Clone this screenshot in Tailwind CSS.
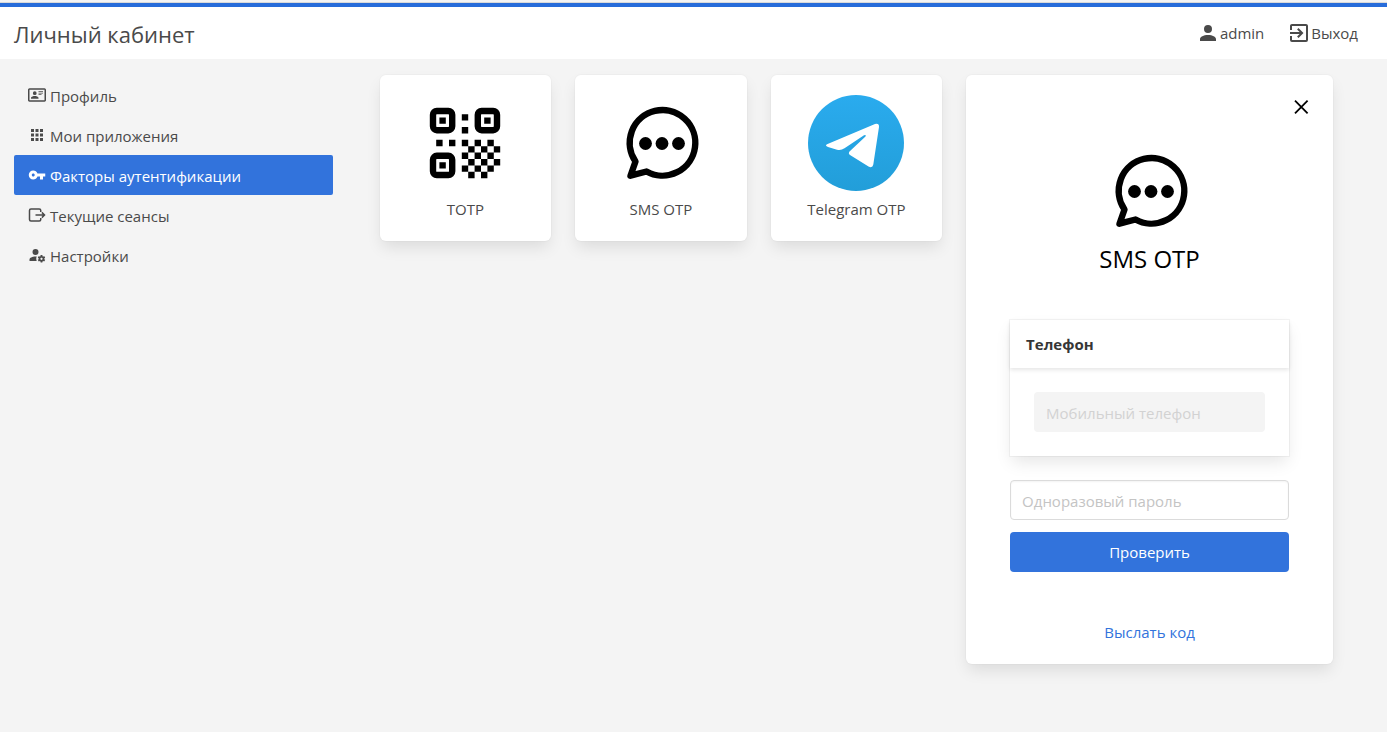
<!DOCTYPE html>
<html lang="ru">

<head>
  <meta charset="UTF-8">
  <meta name="viewport" content="width=device-width, initial-scale=1.0">
  <title>Личный кабинет</title>
  <script src="https://cdn.jsdelivr.net/npm/@tailwindcss/browser@4"></script>
</head>

<body class="min-h-screen bg-[#f4f4f4] font-['Open_Sans',sans-serif] text-[15px] leading-6 text-[#4a4a4a]">
  <!-- Header -->
  <div class="h-[3px] border-b border-[#d9d9d9] bg-[#f4f4f4]"></div>
  <header class="flex h-14 items-center justify-between border-t-4 border-[#276cda] bg-white pl-3.5 pr-[29px]">
    <h1 class="pt-0.5 text-[22px] leading-8">Личный кабинет</h1>
    <nav class="flex items-center gap-[23px]">
      <a href="#" class="flex items-center">
        <svg class="size-6" viewBox="0 0 24 24" fill="currentColor"><path d="M12,4A4,4 0 0,1 16,8A4,4 0 0,1 12,12A4,4 0 0,1 8,8A4,4 0 0,1 12,4M12,14C16.42,14 20,15.79 20,18V20H4V18C4,15.79 7.58,14 12,14Z"/></svg>
        <span>admin</span>
      </a>
      <a href="#" class="flex items-center">
        <svg class="size-6" viewBox="0 0 24 24" fill="currentColor"><path d="M19,3H5C3.89,3 3,3.89 3,5V9H5V5H19V19H5V15H3V19A2,2 0 0,0 5,21H19A2,2 0 0,0 21,19V5C21,3.89 20.1,3 19,3M10.08,15.58L11.5,17L16.5,12L11.5,7L10.08,8.41L12.67,11H3V13H12.67L10.08,15.58Z"/></svg>
        <span>Выход</span>
      </a>
    </nav>
  </header>

  <div class="flex items-start pt-4">
    <!-- Sidebar -->
    <aside class="w-1/4 shrink-0 px-3.5">
      <ul>
        <li>
          <a href="#" class="flex h-10 items-center gap-1 rounded-xs px-3.5">
            <svg class="size-[18px]" viewBox="0 0 24 24" fill="currentColor"><path d="M22,3H2C0.91,3.04 0.04,3.91 0,5V19C0.04,20.09 0.91,20.96 2,21H22C23.09,20.96 23.96,20.09 24,19V5C23.96,3.91 23.09,3.04 22,3M22,19H2V5H22V19M14,17V15.75C14,14.09 10.66,13.25 9,13.25C7.34,13.25 4,14.09 4,15.75V17H14M9,7A2.5,2.5 0 0,0 6.5,9.5A2.5,2.5 0 0,0 9,12A2.5,2.5 0 0,0 11.5,9.5A2.5,2.5 0 0,0 9,7M14,7V8H20V7H14M14,9V10H20V9H14M14,11V12H18V11H14"/></svg>
            <span class="pt-0.5">Профиль</span>
          </a>
        </li>
        <li>
          <a href="#" class="flex h-10 items-center gap-1 rounded-xs px-3.5">
            <svg class="size-[18px]" viewBox="0 0 24 24" fill="currentColor"><path d="M16,20H20V16H16M16,14H20V10H16M10,8H14V4H10M16,8H20V4H16M10,14H14V10H10M4,14H8V10H4M4,20H8V16H4M10,20H14V16H10M4,8H8V4H4V8Z"/></svg>
            <span class="pt-0.5">Мои приложения</span>
          </a>
        </li>
        <li>
          <a href="#" class="flex h-10 items-center gap-1 rounded-xs bg-[#3273dc] px-3.5 text-white">
            <svg class="size-[18px]" viewBox="0 0 24 24" fill="currentColor"><path d="M7 14C5.9 14 5 13.1 5 12S5.9 10 7 10 9 10.9 9 12 8.1 14 7 14M12.6 10C11.8 7.7 9.6 6 7 6C3.7 6 1 8.7 1 12S3.7 18 7 18C9.6 18 11.8 16.3 12.6 14H16V18H20V14H23V10H12.6Z"/></svg>
            <span class="pt-0.5">Факторы аутентификации</span>
          </a>
        </li>
        <li>
          <a href="#" class="flex h-10 items-center gap-1 rounded-xs px-3.5">
            <svg class="size-[18px]" viewBox="0 0 24 24" fill="none" stroke="currentColor" stroke-width="2"><path d="M17 8V6a2 2 0 0 0-2-2H4a2 2 0 0 0-2 2v12a2 2 0 0 0 2 2h11a2 2 0 0 0 2-2v-2M10 12h11M18.500 8.500L22 12l-3.500 3.500"/></svg>
            <span class="pt-0.5">Текущие сеансы</span>
          </a>
        </li>
        <li>
          <a href="#" class="flex h-10 items-center gap-1 rounded-xs px-3.5">
            <svg class="size-[18px]" viewBox="0 0 24 24" fill="currentColor"><path d="M10 4A4 4 0 0 0 6 8A4 4 0 0 0 10 12A4 4 0 0 0 14 8A4 4 0 0 0 10 4M17 12C16.87 12 16.76 12.09 16.74 12.21L16.55 13.53C16.25 13.66 15.96 13.82 15.7 14L14.46 13.5C14.35 13.5 14.22 13.5 14.15 13.63L13.15 15.36C13.09 15.47 13.11 15.6 13.21 15.68L14.27 16.5C14.25 16.67 14.24 16.83 14.24 17C14.24 17.17 14.25 17.33 14.27 17.5L13.21 18.32C13.12 18.4 13.09 18.53 13.15 18.64L14.15 20.37C14.21 20.5 14.34 20.5 14.46 20.5L15.7 20C15.96 20.18 16.24 20.35 16.55 20.47L16.74 21.79C16.76 21.91 16.86 22 17 22H19C19.11 22 19.22 21.91 19.24 21.79L19.43 20.47C19.73 20.34 20 20.18 20.27 20L21.5 20.5C21.63 20.5 21.76 20.5 21.83 20.37L22.83 18.64C22.89 18.53 22.86 18.4 22.77 18.32L21.7 17.5C21.72 17.33 21.74 17.17 21.74 17C21.74 16.83 21.73 16.67 21.7 16.5L22.76 15.68C22.85 15.6 22.88 15.47 22.82 15.36L21.82 13.63C21.76 13.5 21.63 13.5 21.5 13.5L20.27 14C20 13.82 19.73 13.65 19.42 13.53L19.23 12.21C19.22 12.09 19.11 12 19 12H17M10 14C5.58 14 2 15.79 2 18V20H11.68A7 7 0 0 1 11 17A7 7 0 0 1 11.64 14.09C11.11 14.03 10.56 14 10 14M18 15.5C18.83 15.5 19.5 16.17 19.5 17C19.5 17.83 18.83 18.5 18 18.5C17.16 18.5 16.5 17.83 16.5 17C16.5 16.17 17.17 15.5 18 15.5Z"/></svg>
            <span class="pt-0.5">Настройки</span>
          </a>
        </li>
      </ul>
    </aside>

    <!-- Factors -->
    <main class="grid grow grid-cols-5 items-start gap-6 pl-[33px] pr-[54px]">
      <a href="#" class="flex flex-col items-center gap-1.5 rounded-md bg-white py-5 shadow-[0_8px_16px_-2px_rgba(10,10,10,0.1),0_0_0_1px_rgba(10,10,10,0.02)]">
        <svg class="size-24" viewBox="0 0 15 15">
          <g fill="none" stroke="#000">
            <rect x="2.5" y="2.5" width="3" height="3" rx=".6"/>
            <rect x="9.5" y="2.5" width="3" height="3" rx=".6"/>
            <rect x="2.5" y="9.5" width="3" height="3" rx=".6"/>
          </g>
          <path d="M3.5 3.5h1v1h-1zM10.5 3.5h1v1h-1zM3.5 10.5h1v1h-1zM7 3h1v1h-1zM7 5h1v1h-1zM3 7h1v1h-1zM5 7h1v1h-1zM7 7h1v1h-1zM9 7h1v1h-1zM11 7h1v1h-1zM8 8h1v1h-1zM10 8h1v1h-1zM12 8h1v1h-1zM7 9h1v1h-1zM9 9h1v1h-1zM11 9h1v1h-1zM8 10h1v1h-1zM10 10h1v1h-1zM12 10h1v1h-1zM7 11h1v1h-1zM9 11h1v1h-1zM11 11h1v1h-1zM8 12h1v1h-1zM10 12h1v1h-1z"/>
        </svg>
        <span>TOTP</span>
      </a>
      <a href="#" class="flex flex-col items-center gap-1.5 rounded-md bg-white py-5 shadow-[0_8px_16px_-2px_rgba(10,10,10,0.1),0_0_0_1px_rgba(10,10,10,0.02)]">
        <svg class="size-24" viewBox="0 0 96 96">
          <path d="M22.5 66.500L17.5 80.700L33.5 76.500A32.800 32.800 0 1 0 22.5 66.500Z" fill="none" stroke="#000" stroke-width="6.4" stroke-linejoin="round"/>
          <circle cx="32.5" cy="48.500" r="6.4"/><circle cx="49" cy="48.500" r="6.4"/><circle cx="65.5" cy="48.500" r="6.4"/>
        </svg>
        <span>SMS OTP</span>
      </a>
      <a href="#" class="flex flex-col items-center gap-1.5 rounded-md bg-white py-5 shadow-[0_8px_16px_-2px_rgba(10,10,10,0.1),0_0_0_1px_rgba(10,10,10,0.02)]">
        <svg class="size-24" viewBox="0 0 96 96">
          <defs>
            <linearGradient id="tg" x1="0" y1="0" x2="0" y2="1">
              <stop offset="0" stop-color="#2aabee"/>
              <stop offset="1" stop-color="#229ed9"/>
            </linearGradient>
          </defs>
          <circle cx="48" cy="48" r="48" fill="url(#tg)"/>
          <path d="M19 49.200L67 29Q71.300 28 71 32L65.300 69.500Q64.500 73.500 60.500 71.500L42 60Q40 58.500 41.500 56.500L57.500 41.500Q58.500 39.500 56 40.300L36.500 53.300Q33 55.700 29 54.700L20 52Q16.500 50.500 19 49.200Z" fill="#fff"/>
        </svg>
        <span>Telegram OTP</span>
      </a>

      <!-- SMS OTP panel -->
      <section class="relative col-span-2 flex flex-col items-center rounded-md bg-white px-11 pb-5 pt-[68px] shadow-[0_8px_16px_-2px_rgba(10,10,10,0.1),0_0_0_1px_rgba(10,10,10,0.02)]">
        <button type="button" aria-label="Закрыть" class="absolute right-5 top-5 text-black">
          <svg class="size-6" viewBox="0 0 24 24" fill="none" stroke="currentColor" stroke-width="1.8"><path d="M6 5.700L18.600 18.300M18.600 5.700L6 18.300"/></svg>
        </button>
        <svg class="size-24" viewBox="0 0 96 96">
          <path d="M22.5 66.500L17.5 80.700L33.5 76.500A32.800 32.800 0 1 0 22.5 66.500Z" fill="none" stroke="#000" stroke-width="6.4" stroke-linejoin="round"/>
          <circle cx="32.5" cy="48.500" r="6.4"/><circle cx="49" cy="48.500" r="6.4"/><circle cx="65.5" cy="48.500" r="6.4"/>
        </svg>
        <h2 class="mt-1 text-2xl font-medium text-black">SMS OTP</h2>

        <form class="mt-[45px] w-full">
          <div class="bg-white shadow-[0_8px_16px_-2px_rgba(10,10,10,0.1),0_0_0_1px_rgba(10,10,10,0.04)]">
            <label for="phone" class="block px-4 py-3 font-bold text-[#363636] shadow-[0_2px_4px_rgba(10,10,10,0.1)]">Телефон</label>
            <div class="p-6">
              <input type="tel" id="phone" name="phone" placeholder="Мобильный телефон" disabled
                class="block h-10 w-full rounded-sm bg-[#f4f4f4] px-3 pt-0.5 placeholder:text-[#d2d2d2]">
            </div>
          </div>
          <input type="text" id="otp" name="otp" placeholder="Одноразовый пароль" aria-label="Одноразовый пароль"
            class="mt-6 block h-10 w-full rounded-sm border border-[#dbdbdb] px-[11px] pt-0.5 shadow-[inset_0_1px_2px_rgba(10,10,10,0.05)] placeholder:text-[#c4c4c4]">
          <button type="submit" class="mt-3 block h-10 w-full rounded-sm bg-[#3273dc] text-white">Проверить</button>
        </form>
        <a href="#" class="mt-12 text-[#3273dc]">Выслать код</a>
      </section>
    </main>
  </div>
</body>

</html>
